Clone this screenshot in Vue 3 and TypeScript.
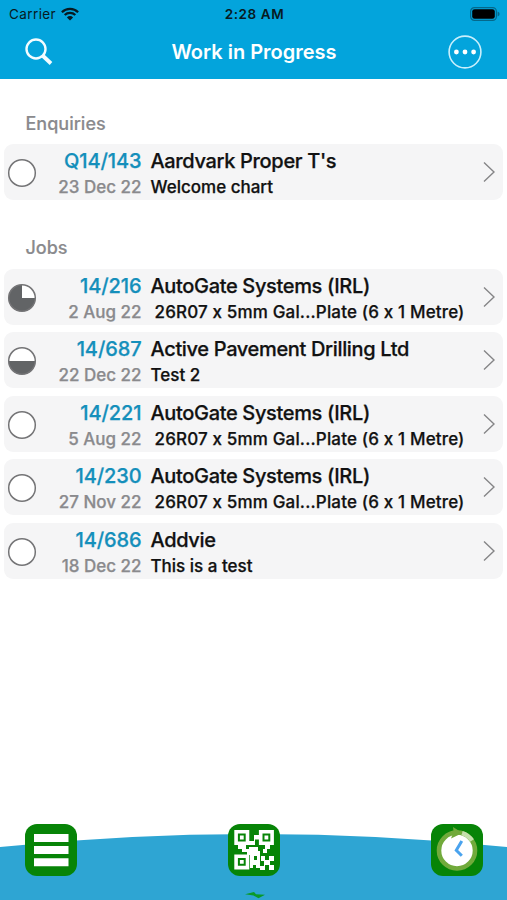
<script setup lang="ts">
interface Entry {
  code: string
  date: string
  name: string
  detail: string
  progress: 'none' | 'half' | 'most'
  indented?: boolean
}

interface Section {
  title: string
  entries: Entry[]
}

const plate = '26R07 x 5mm Gal...Plate (6 x 1 Metre)'

const sections: Section[] = [
  {
    title: 'Enquiries',
    entries: [
      { code: 'Q14/143', date: '23 Dec 22', name: "Aardvark Proper T's", detail: 'Welcome chart', progress: 'none' },
    ],
  },
  {
    title: 'Jobs',
    entries: [
      { code: '14/216', date: '2 Aug 22', name: 'AutoGate Systems (IRL)', detail: plate, progress: 'most', indented: true },
      { code: '14/687', date: '22 Dec 22', name: 'Active Pavement Drilling Ltd', detail: 'Test 2', progress: 'half' },
      { code: '14/221', date: '5 Aug 22', name: 'AutoGate Systems (IRL)', detail: plate, progress: 'none', indented: true },
      { code: '14/230', date: '27 Nov 22', name: 'AutoGate Systems (IRL)', detail: plate, progress: 'none', indented: true },
      { code: '14/686', date: '18 Dec 22', name: 'Addvie', detail: 'This is a test', progress: 'none' },
    ],
  },
]
</script>

<template>
  <div class="screen">
    <header class="header">
      <div class="status">
        <div class="carrier">
          <span class="carrier-name">Carrier</span>
          <svg class="wifi" width="18" height="14" viewBox="0 0 18 14">
            <path d="M.9 5.2a11.6 11.6 0 0 1 16.2 0M3.7 8a7.6 7.6 0 0 1 10.600 0" fill="none" stroke="#071a22" stroke-width="2.3" />
            <path d="M9 13.6 5.9 10.4a4.4 4.4 0 0 1 6.2 0Z" fill="#071a22" />
          </svg>
        </div>
        <span class="time">2:28 AM</span>
        <svg class="battery" width="30" height="14" viewBox="0 0 30 14">
          <rect x=".6" y=".6" width="25.8" height="12.8" rx="3.8" fill="none" stroke="#04688b" stroke-width="1.2" />
          <rect x="2.2" y="2.2" width="22.6" height="9.6" rx="2.4" fill="#000" />
          <path d="M27.6 4.6q2 .8 2 2.4t-2 2.4Z" fill="#04688b" />
        </svg>
      </div>
      <nav class="nav">
        <svg width="28" height="28" viewBox="0 0 28 28">
          <circle cx="11" cy="11" r="9.500" fill="none" stroke="#f2fcff" stroke-width="2.4" />
          <path d="m17.500 17.500 8.500 8" stroke="#f2fcff" stroke-width="3.800" />
        </svg>
        <h1 class="title">Work in Progress</h1>
        <svg width="34" height="34" viewBox="0 0 34 34">
          <circle cx="17" cy="17" r="15.9" fill="none" stroke="#c9effc" stroke-width="1.6" />
          <g fill="#fff"><circle cx="8.4" cy="17" r="2.4" /><circle cx="17" cy="17" r="2.4" /><circle cx="25.6" cy="17" r="2.4" /></g>
        </svg>
      </nav>
    </header>

    <main class="content">
      <section v-for="section in sections" :key="section.title" class="section">
        <h2 class="heading">{{ section.title }}</h2>
        <ul class="list">
          <li v-for="entry in section.entries" :key="entry.code" class="row">
            <svg class="progress" width="30" height="30" viewBox="0 0 30 30">
              <circle cx="15" cy="15" r="13.3" fill="#fff" />
              <path v-if="entry.progress === 'half'" d="M1.7 15h26.6a13.3 13.3 0 0 1-26.6 0Z" fill="#626466" />
              <path v-if="entry.progress === 'most'" d="M15 15h13.3A13.3 13.3 0 1 1 15 1.7Z" fill="#626466" />
              <circle cx="15" cy="15" r="13.3" fill="none" stroke="#747476" stroke-width="1.5" />
            </svg>
            <div class="reference">
              <span class="code">{{ entry.code }}</span>
              <span class="date">{{ entry.date }}</span>
            </div>
            <div class="summary">
              <span class="name">{{ entry.name }}</span>
              <span class="detail" :class="{ indented: entry.indented }">{{ entry.detail }}</span>
            </div>
            <svg class="chevron" width="12" height="22" viewBox="0 0 12 22">
              <path d="m1 1.5 10 9.5L1 20.5" fill="none" stroke="#858587" stroke-width="1.4" />
            </svg>
          </li>
        </ul>
      </section>
    </main>

    <footer class="footer">
      <svg class="wave" width="507" height="66" viewBox="0 0 507 66">
        <path d="M0 13Q125 0 254 0T507 13V66H0Z" fill="#2ea5d3" />
      </svg>
      <div class="tools">
        <button class="tool" aria-label="Menu">
          <svg width="52" height="52" viewBox="0 0 52 52">
            <path d="M9 10h34.500v8H9zM9 22h34.500v8H9zM9 34.200h34.500v8H9z" fill="#fff" />
          </svg>
        </button>
        <button class="tool" aria-label="Scan code">
          <svg width="52" height="52" viewBox="0 0 52 52">
            <path d="M8.100 7.800h11.400v11.400H8.100zM32.700 7.800h11.400v11.400H32.700zM8.100 32.200h11.400v11.400H8.100z" fill="none" stroke="#fff" stroke-width="3.600" />
            <path d="M11.900 11.600h3.800v3.800h-3.800zM36.500 11.600h3.800v3.800h-3.800zM11.900 36h3.800v3.800h-3.800z" fill="#fff" />
            <path d="M26 11h5v4.500h-4V21h-6v-4h5zM10 21h8v4h3v-2h9v4h2v4H19v-3h-5v-3h-4zM37 21h5v4h-3v4h-4v-4h2z" fill="#fff" />
            <path d="M22 30h10v14h-4v-3h-3v3h-3zm4 2v4h3v-4z" fill="#fff" fill-rule="evenodd" />
            <path d="M33 32h4v4h4v-4h5v5h-4v4h4v5h-5v-5h-4v5h-5v-4h4v-5h-3z" fill="#fff" />
          </svg>
        </button>
        <button class="tool" aria-label="Time">
          <svg width="52" height="52" viewBox="0 0 52 52">
            <circle cx="26" cy="26.500" r="18" fill="#fff" stroke="#71aa3b" stroke-width="4.600" />
            <path d="M31 9.100a18 18 0 0 1 10 7.500" fill="none" stroke="#c5dfac" stroke-width="4.600" />
            <path d="m22 3 9.500 6L20 14.500l1.500-4-7 2 8-5.500Z" fill="#71aa3b" />
            <path d="m30.800 17-5.500 9.300 5.500 5.500" fill="none" stroke="#4aa3ee" stroke-width="3" />
          </svg>
        </button>
      </div>
      <svg class="spark" width="22" height="8" viewBox="0 0 22 8">
        <path d="m1 3.300 9-2.300 2 2.200 9 .5-6.500 3.600-5-2.800Z" fill="#0a9a28" />
      </svg>
    </footer>
  </div>
</template>

<style>
body {
  margin: 0;
}
</style>

<style scoped>
.screen {
  display: flex;
  flex-direction: column;
  width: 507px;
  height: 900px;
  overflow: hidden;
  background: #fff;
  font-family: Inter, "Liberation Sans", sans-serif;
  font-feature-settings: "calt" 0;
}
.header {
  box-sizing: border-box;
  height: 79px;
  background: #03a4dc;
}
.status {
  display: grid;
  grid-template-columns: 1fr auto 1fr;
  align-items: center;
  height: 27px;
  padding: 0 7px 0 9px;
  color: #071a22;
  font-size: 13.5px;
}
.carrier {
  display: flex;
  align-items: center;
  gap: 5px;
}
.carrier-name {
  letter-spacing: 0.4px;
}
.time {
  font-weight: 600;
  font-size: 13.5px;
  letter-spacing: 0.6px;
}
.battery {
  justify-self: end;
}
.nav {
  display: grid;
  grid-template-columns: 34px 1fr 34px;
  align-items: center;
  height: 50px;
  padding: 0 25px;
}
.title {
  margin: 0;
  padding-left: 1px;
  color: #fff;
  font-size: 20px;
  font-weight: 600;
  text-align: center;
}
.content {
  flex: 1;
  padding: 0 4px;
}
.section {
  padding-top: 30px;
}
.section + .section {
  padding-top: 34px;
}
.heading {
  box-sizing: border-box;
  height: 34.5px;
  margin: 0;
  padding: 1px 0 0 21.500px;
  color: #8a8a8d;
  font-size: 18px;
  font-weight: 500;
  line-height: 28px;
  -webkit-text-stroke: 0.15px currentColor;
}
.section + .section .heading {
  height: 35px;
  padding-top: 0;
}
.list {
  display: flex;
  flex-direction: column;
  gap: 7.5px;
  margin: 0;
  padding: 0;
  list-style: none;
}
.row {
  display: flex;
  align-items: center;
  box-sizing: border-box;
  height: 56px;
  padding: 0 8px 0 3px;
  border-radius: 9px;
  background: #f5f5f6;
}
.progress {
  margin-top: 2px;
}
.reference,
.summary {
  display: flex;
  flex-direction: column;
  padding-top: 4px;
  -webkit-text-stroke: 0.25px currentColor;
}
.reference {
  align-items: flex-end;
  width: 104.5px;
}
.summary {
  flex: 1;
  padding-left: 9px;
  color: #111;
  white-space: nowrap;
}
.code,
.name {
  font-size: 20px;
  font-weight: 500;
  line-height: 26px;
}
.name {
  letter-spacing: -0.34px;
}
.code {
  color: #148fbb;
  letter-spacing: -0.1px;
}
.date,
.detail {
  font-size: 17px;
  font-weight: 500;
  line-height: 26px;
}
.date {
  color: #8a8a8d;
}
.indented {
  padding-left: 4px;
  letter-spacing: 0.16px;
}
.footer {
  position: relative;
  height: 66px;
}
.wave {
  display: block;
}
.tools {
  position: absolute;
  top: -10px;
  right: 24px;
  left: 25px;
  display: flex;
  justify-content: space-between;
}
.tool {
  width: 52px;
  height: 52px;
  padding: 0;
  border: 0;
  border-radius: 12px;
  background: #078407;
}
.tool svg {
  display: block;
}
.spark {
  position: absolute;
  top: 57px;
  left: 244px;
}
</style>
